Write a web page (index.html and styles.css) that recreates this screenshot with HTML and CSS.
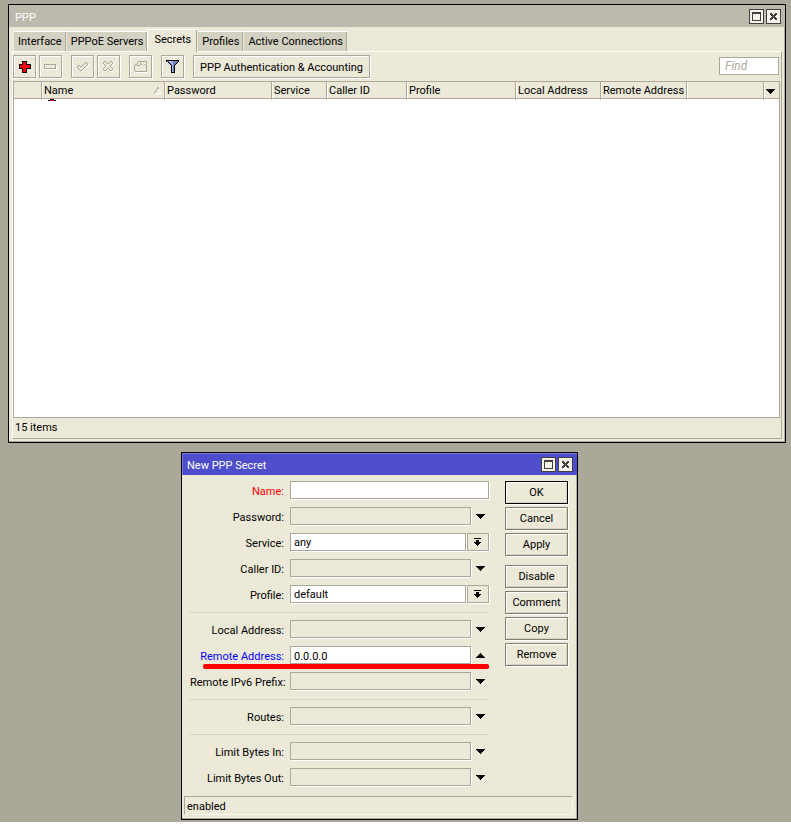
FILE: index.html
```
<!DOCTYPE html>
<html lang="en">
<head>
    <meta charset="UTF-8" />
    <title>PPP</title>
    <link rel="stylesheet" href="styles.css">
</head>
<body>
    <!-- shared icons -->
    <svg class="sprite" aria-hidden="true">
        <symbol id="i-max" viewBox="0 0 9 9"><path d="M0 0h9v9H0zM1 2v6h7V2z" fill="#404040" fill-rule="evenodd" /></symbol>
        <symbol id="i-close" viewBox="0 0 9 9"><path d="M1 1h2v1h1v1h1V2h1V1h2v2H7v1H6v1h1v1h1v2H6V7H5V6H4v1H3v1H1V6h1V5h1V4H2V3H1z" fill="#404040" /></symbol>
        <symbol id="i-down" viewBox="0 0 9 5"><path d="M0 0h9v1H8v1H7v1H6v1H5v1H4V4H3V3H2V2H1V1H0z" /></symbol>
        <symbol id="i-up" viewBox="0 0 9 5"><path d="M0 5h9V4H8V3H7V2H6V1H5V0H4v1H3v1H2v1H1v1H0z" /></symbol>
        <symbol id="i-pick" viewBox="0 0 7 8"><path d="M0 0h7v1H0zM2 2h3v2h2v1H6v1H5v1H4v1H3V7H2V6H1V5H0V4h2z" /></symbol>
    </svg>

    <main class="desktop">
        <section class="window ppp">
            <header class="titlebar">
                <h1>PPP</h1>
                <button class="win-btn" aria-label="Maximize"><svg width="9" height="9"><use href="#i-max" /></svg></button>
                <button class="win-btn" aria-label="Close"><svg width="9" height="9"><use href="#i-close" /></svg></button>
            </header>

            <nav class="tabs">
                <button class="tab">Interface</button>
                <button class="tab">PPPoE Servers</button>
                <button class="tab active">Secrets</button>
                <button class="tab">Profiles</button>
                <button class="tab">Active Connections</button>
            </nav>

            <div class="panel">
                <div class="toolbar">
                    <div class="tools">
                        <button class="tool" aria-label="Add">
                            <svg width="13" height="13" viewBox="0 0 13 13"><path d="M4 1h5v3h4v5H9v4H4V9H1V4h3z" /><path d="M5 2h3v3h4v3H8v4H5V8H2V5h3z" fill="#f00" /></svg>
                        </button>
                        <button class="tool" aria-label="Remove">
                            <svg width="13" height="13" viewBox="0 0 13 13"><path d="M1 5h12v5H1z" fill="#fff" /><path d="M0 4h12v5H0z" fill="#aca899" /><path d="M1 5h10v3H1z" fill="#ece9d8" /></svg>
                        </button>
                    </div>
                    <div class="tools">
                        <button class="tool" aria-label="Enable">
                            <svg width="13" height="13" viewBox="0 0 13 13"><path d="M1 7l2-2 2 2 5-5 2 2-7 7z" fill="none" stroke="#fff" transform="translate(1 1)" /><path d="M1 7l2-2 2 2 5-5 2 2-7 7z" fill="#ece9d8" stroke="#aca899" /></svg>
                        </button>
                        <button class="tool" aria-label="Disable">
                            <svg width="13" height="13" viewBox="0 0 13 13"><path d="M1 3l2-2 3 3 3-3 2 2-3 3 3 3-2 2-3-3-3 3-2-2 3-3z" fill="none" stroke="#fff" transform="translate(1 1)" /><path d="M1 3l2-2 3 3 3-3 2 2-3 3 3 3-2 2-3-3-3 3-2-2 3-3z" fill="#ece9d8" stroke="#aca899" /></svg>
                        </button>
                    </div>
                    <div class="tools">
                        <button class="tool" aria-label="Comment">
                            <svg width="14" height="12" viewBox="0 0 14 12"><path d="M2 11h12V2" fill="none" stroke="#fff" /><path d="M4 1h9v9H1V4h2V2h1z" fill="#ece9d8" /><path d="M4 0h9v1H4zM3 1h1v2H3zM1 3h2v1H1zM0 4h1v6H0zM12 1h1v9h-1zM1 10h12v1H1zM3 4h3v1H3zM6 2h1v2H6zM8 3h1v1H8zM10 3h1v1h-1z" fill="#aca899" /></svg>
                        </button>
                    </div>
                    <div class="tools">
                        <button class="tool" aria-label="Filter">
                            <svg width="13" height="13" viewBox="0 0 13 13"><path d="M0 0h13v2h-1v1h-1v1h-1v1H9v8H5V5H4V4H3V3H2V2H1 0z" /><path d="M1 1h11v1h-1v1h-1v1H9v1H8v7H6V5H5V4H4V3H3V2H1z" fill="#6c80bc" /><path d="M3 1h4v3H5V3H4V2H3zM6 4h1v8H6z" fill="#a8b8e0" /></svg>
                        </button>
                    </div>
                    <button class="tool wide">PPP Authentication &amp; Accounting</button>
                    <input class="find" type="text" placeholder="Find" aria-label="Find">
                </div>

                <div class="list">
                    <table>
                        <colgroup>
                            <col class="c-flag"><col class="c-name"><col class="c-password"><col class="c-service"><col class="c-caller">
                            <col class="c-profile"><col class="c-local"><col class="c-remote"><col><col class="c-menu">
                        </colgroup>
                        <thead>
                            <tr>
                                <th></th>
                                <th class="sorted">Name<svg class="sort" width="8" height="8" viewBox="0 0 8 8"><path d="M4 0l3 7H0" stroke="#fff" fill="none" /><path d="M0 7L4 0l1 2" stroke="#aca899" fill="none" /></svg></th>
                                <th>Password</th>
                                <th>Service</th>
                                <th>Caller ID</th>
                                <th>Profile</th>
                                <th>Local Address</th>
                                <th>Remote Address</th>
                                <th></th>
                                <th><button class="columns" aria-label="Columns"><svg width="9" height="5"><use href="#i-down" /></svg></button></th>
                            </tr>
                        </thead>
                        <tbody>
                            <tr>
                                <td></td>
                                <td><svg class="entry" width="8" height="2" viewBox="0 0 8 2"><path d="M2 0h4v1h2v1H0V1h2z" /><path d="M2 1h4v1H2z" fill="#e0007c" /></svg></td>
                                <td></td><td></td><td></td><td></td><td></td><td></td><td></td><td></td>
                            </tr>
                        </tbody>
                    </table>
                </div>
                <footer class="count">15 items</footer>
            </div>
        </section>

        <section class="window secret">
            <header class="titlebar">
                <h2>New PPP Secret</h2>
                <button class="win-btn" aria-label="Maximize"><svg width="9" height="9"><use href="#i-max" /></svg></button>
                <button class="win-btn" aria-label="Close"><svg width="9" height="9"><use href="#i-close" /></svg></button>
            </header>

            <form class="content" onsubmit="return false">
                <div class="fields">
                    <div class="group">
                        <div class="row">
                            <label class="required" for="name">Name:</label>
                            <input id="name" type="text">
                        </div>
                        <div class="row">
                            <label for="password">Password:</label>
                            <input id="password" class="unset" type="text">
                            <button type="button" class="toggle" aria-label="Set password"><svg width="9" height="5"><use href="#i-down" /></svg></button>
                        </div>
                        <div class="row">
                            <label for="service">Service:</label>
                            <select id="service"><option>any</option></select>
                            <button type="button" class="pick" aria-label="Choose service"><svg width="7" height="8"><use href="#i-pick" /></svg></button>
                        </div>
                        <div class="row">
                            <label for="caller">Caller ID:</label>
                            <input id="caller" class="unset" type="text">
                            <button type="button" class="toggle" aria-label="Set caller ID"><svg width="9" height="5"><use href="#i-down" /></svg></button>
                        </div>
                        <div class="row">
                            <label for="profile">Profile:</label>
                            <select id="profile"><option>default</option></select>
                            <button type="button" class="pick" aria-label="Choose profile"><svg width="7" height="8"><use href="#i-pick" /></svg></button>
                        </div>
                    </div>
                    <div class="group">
                        <div class="row">
                            <label for="local">Local Address:</label>
                            <input id="local" class="unset" type="text">
                            <button type="button" class="toggle" aria-label="Set local address"><svg width="9" height="5"><use href="#i-down" /></svg></button>
                        </div>
                        <div class="row marked">
                            <label class="changed" for="remote">Remote Address:</label>
                            <input id="remote" type="text" value="0.0.0.0">
                            <button type="button" class="toggle" aria-label="Clear remote address"><svg width="9" height="5"><use href="#i-up" /></svg></button>
                        </div>
                        <div class="row">
                            <label for="ipv6">Remote IPv6 Prefix:</label>
                            <input id="ipv6" class="unset" type="text">
                            <button type="button" class="toggle" aria-label="Set IPv6 prefix"><svg width="9" height="5"><use href="#i-down" /></svg></button>
                        </div>
                    </div>
                    <div class="group">
                        <div class="row">
                            <label for="routes">Routes:</label>
                            <input id="routes" class="unset" type="text">
                            <button type="button" class="toggle" aria-label="Set routes"><svg width="9" height="5"><use href="#i-down" /></svg></button>
                        </div>
                    </div>
                    <div class="group">
                        <div class="row">
                            <label for="bytes-in">Limit Bytes In:</label>
                            <input id="bytes-in" class="unset" type="text">
                            <button type="button" class="toggle" aria-label="Set limit in"><svg width="9" height="5"><use href="#i-down" /></svg></button>
                        </div>
                        <div class="row">
                            <label for="bytes-out">Limit Bytes Out:</label>
                            <input id="bytes-out" class="unset" type="text">
                            <button type="button" class="toggle" aria-label="Set limit out"><svg width="9" height="5"><use href="#i-down" /></svg></button>
                        </div>
                    </div>
                </div>

                <div class="actions">
                    <div class="stack">
                        <button class="action default">OK</button>
                        <button type="button" class="action">Cancel</button>
                        <button type="button" class="action">Apply</button>
                    </div>
                    <div class="stack">
                        <button type="button" class="action">Disable</button>
                        <button type="button" class="action">Comment</button>
                        <button type="button" class="action">Copy</button>
                        <button type="button" class="action">Remove</button>
                    </div>
                </div>
            </form>
            <footer class="status">enabled</footer>
        </section>
    </main>
</body>
</html>
```
FILE: styles.css
```
:root {
    --desktop: #aca899;
    --face: #ece9d8;
    --line: #aca899;
    --light: #ffffff;
    --tab: #d3d1c1;
    --title: #bdb9ad;
    --title-active: #4e4ecc;
}

* {
    margin: 0;
    padding: 0;
    box-sizing: border-box;
}

html {
    background: #fff;
}

body,
button,
input,
select {
    font: 11px/14px Roboto, "Liberation Sans", Arial, sans-serif;
    color: #000;
}

svg {
    display: block;
    shape-rendering: crispEdges;
}

.sprite {
    position: absolute;
    width: 0;
    height: 0;
}

.desktop {
    background: var(--desktop);
    padding: 4px 5px 2px 8px;
}

.window {
    background: var(--face);
    border: 1px solid #000;
    box-shadow: inset -1px -1px var(--line);
}

/* title bars */
.titlebar {
    display: flex;
    align-items: center;
    gap: 2px;
    height: 22px;
    padding: 0 4px 0 6px;
    background: var(--title);
    color: #fff;
}

.titlebar h1,
.titlebar h2 {
    flex: 1;
    padding-top: 4px;
    font-size: 11px;
    font-weight: normal;
}

.win-btn {
    display: grid;
    place-items: center;
    width: 15px;
    height: 15px;
    background: #f8f4ec;
    border: 1px solid #404040;
}

/* tabs */
.tabs {
    display: flex;
    align-items: flex-end;
    height: 24px;
    padding-left: 5px;
}

.tab {
    height: 20px;
    padding: 1px 4px 0;
    background: var(--tab);
    border: solid var(--light);
    border-width: 1px 0 0;
    box-shadow: inset -1px 0 var(--line);
    white-space: nowrap;
}

.tab + .tab {
    margin-left: 1px;
}

.tab.active {
    height: 23px;
    margin: 0 0 -1px;
    padding: 0 6px 2px;
    background: var(--face);
    border-left-width: 1px;
    z-index: 1;
}

.panel {
    margin: 0 3px 3px;
    border: 1px solid var(--light);
    border-right-color: var(--line);
    border-bottom-color: var(--line);
}

/* toolbar */
.toolbar {
    display: flex;
    gap: 9px;
    padding: 3px 2px 3px 0;
}

.tools {
    display: flex;
    gap: 3px;
}

.tool {
    display: grid;
    place-items: center;
    width: 23px;
    height: 23px;
    background: var(--face);
    border: 1px solid var(--line);
    box-shadow: inset 1px 1px var(--light), 1px 1px var(--light);
}

.tool.wide {
    width: 177px;
    padding-top: 2px;
}

.find {
    width: 60px;
    height: 18px;
    margin: 2px 0 0 auto;
    padding: 0 5px;
    border: 1px solid var(--line);
    font-size: 12px;
}

.find::placeholder {
    color: var(--line);
    font-style: italic;
}

/* secrets list */
.list {
    min-height: 337px;
    margin-right: 1px;
    background: #fff;
    border: 1px solid var(--line);
}

table {
    width: 100%;
    table-layout: fixed;
    border-collapse: separate;
    border-spacing: 0;
}

.c-flag { width: 27px; }
.c-name { width: 123px; }
.c-password { width: 107px; }
.c-service { width: 55px; }
.c-caller { width: 80px; }
.c-profile { width: 109px; }
.c-local { width: 85px; }
.c-remote { width: 86px; }
.c-menu { width: 16px; }

th {
    height: 17px;
    padding: 2px 0 0 2px;
    background: var(--face);
    border-bottom: 1px solid var(--line);
    font-weight: normal;
    text-align: left;
    white-space: nowrap;
}

th + th {
    border-left: 1px solid var(--line);
    box-shadow: inset 1px 0 var(--light);
}

td {
    height: 2px;
    vertical-align: top;
}

td + td {
    border-left: 1px solid var(--face);
}

.sorted {
    position: relative;
}

.sort {
    position: absolute;
    right: 2px;
    top: 5px;
    shape-rendering: auto;
}

.entry {
    margin-left: 6px;
}

.columns {
    display: block;
    background: none;
    border: none;
}

.count {
    height: 20px;
    padding: 3px 2px;
}

/* new secret dialog */
.secret {
    width: 50%;
    min-width: 397px;
    margin: 9px 0 0 173px;
}

.secret .titlebar {
    background: var(--title-active);
    box-shadow: inset 1px 1px #7c7cdc;
    padding-left: 5px;
}

.content {
    display: flex;
    gap: 16px;
    padding: 6px 9px 0 8px;
}

.fields {
    flex: 1;
}

.group + .group {
    margin-top: 9px;
    padding-top: 7px;
    border-top: 1px solid #d6d2c2;
}

.row {
    display: flex;
    height: 18px;
}

.row + .row {
    margin-top: 8px;
}

.row label {
    width: 94px;
    margin-right: 6px;
    padding-top: 4px;
    text-align: right;
    white-space: nowrap;
}

.row .required {
    color: #f00;
}

.row .changed {
    color: #00f;
}

.row input,
.row select {
    flex: 1;
    min-width: 0;
    height: 18px;
    padding: 2px 3px 0;
    background: #fff;
    border: 1px solid var(--line);
    border-radius: 0;
    box-shadow: 1px 1px var(--light);
    appearance: none;
}

.row .unset {
    background: var(--face);
}

.toggle {
    display: grid;
    place-items: center;
    width: 18px;
    background: none;
    border: none;
}

.pick {
    display: grid;
    place-items: center;
    width: 22px;
    margin-left: 1px;
    padding-right: 2px;
    background: var(--face);
    border: 1px solid var(--line);
    box-shadow: 1px 1px var(--light);
}

/* underline drawn over the remote address row */
.marked {
    position: relative;
}

.marked::after {
    content: "";
    position: absolute;
    left: 13px;
    right: 0;
    top: 18px;
    height: 5px;
    background: #f00;
    border-radius: 2px;
}

.actions,
.stack {
    display: flex;
    flex-direction: column;
}

.actions {
    gap: 9px;
}

.stack {
    gap: 3px;
}

.action {
    width: 63px;
    height: 23px;
    padding-top: 1px;
    background: var(--face);
    border: 1px solid #817f73;
    box-shadow: inset 1px 1px var(--light), inset -1px -1px #d6d2c2, 1px 1px var(--light);
}

.action.default {
    border-color: #000;
}

.status {
    height: 19px;
    margin: 10px 4px 4px 2px;
    padding: 3px 2px;
    border: 1px solid var(--line);
    border-right-color: #f8f6ee;
    border-bottom-color: #f8f6ee;
}
```
